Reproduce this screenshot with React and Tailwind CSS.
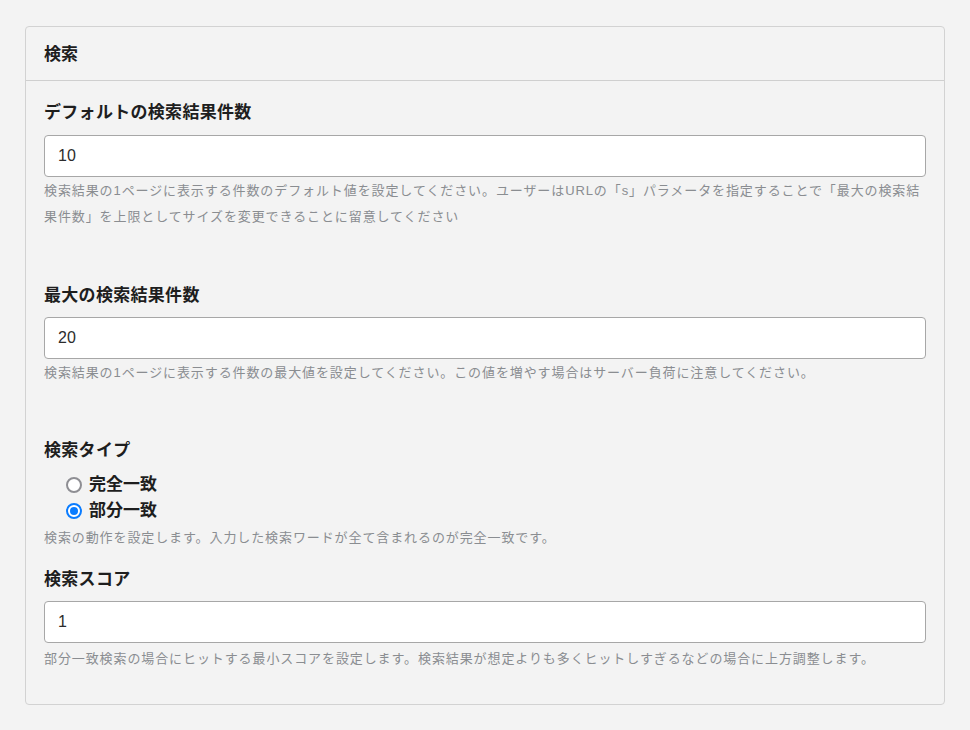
const font = { fontFamily: '"Liberation Sans", "Noto Sans CJK JP", sans-serif' }

const Label = ({ children, className = '' }) => (
  <div className={`text-[17px] leading-[24px] font-bold tracking-[0.3px] text-[#1e1e1e] ${className}`}>{children}</div>
)

const Help = ({ children, className = '' }) => (
  <p className={`text-[13px] leading-[26px] tracking-[0.9px] text-[#8a8d91] ${className}`}>{children}</p>
)

const TextInput = ({ value }) => (
  <input
    type="text"
    defaultValue={value}
    className="block w-full h-[42px] rounded-[4px] border border-[#a7a7a7] bg-white px-[13px] text-[16px] text-[#2c2c2c] outline-none"
    style={font}
  />
)

const Radio = ({ label, checked }) => (
  <label className="flex items-center h-[26px] pl-[22px] gap-[7px] cursor-pointer">
    <span
      className={`flex items-center justify-center w-[16px] h-[16px] rounded-full bg-white border-2 ${
        checked ? 'border-[#0a7cff]' : 'border-[#8e8e93]'
      }`}
    >
      {checked && <span className="w-[8px] h-[8px] rounded-full bg-[#0a7cff]" />}
    </span>
    <span className="text-[17px] font-bold text-[#1e1e1e]">{label}</span>
  </label>
)

export default function App() {
  return (
    <div className="min-h-[730px] bg-[#f3f3f3] pt-[26px] px-[25px]" style={font}>
      <div className="w-[920px] rounded-[4px] border border-[#d2d2d2] bg-[#f3f3f3]">
        <div className="h-[54px] border-b border-[#cfcfcf] px-[18px] pt-[2px] flex items-center">
          <span className="text-[17px] font-bold text-[#1e1e1e]">検索</span>
        </div>
        <div className="px-[18px] pt-[20px] pb-[32px]">
          <Label className="mb-[10px]">デフォルトの検索結果件数</Label>
          <TextInput value="10" />
          <Help className="mt-px">
            検索結果の1ページに表示する件数のデフォルト値を設定してください。ユーザーはURLの「s」パラメータを指定することで「最大の検索結果件数」を上限としてサイズを変更できることに留意してください
          </Help>

          <Label className="mt-[54px] mb-[9px]">最大の検索結果件数</Label>
          <TextInput value="20" />
          <Help className="mt-px">
            検索結果の1ページに表示する件数の最大値を設定してください。この値を増やす場合はサーバー負荷に注意してください。
          </Help>

          <Label className="mt-[53px] mb-[9px]">検索タイプ</Label>
          <Radio label="完全一致" />
          <Radio label="部分一致" checked />
          <Help className="mt-[1px]">検索の動作を設定します。入力した検索ワードが全て含まれるのが完全一致です。</Help>

          <Label className="mt-[17px] mb-[9px]">検索スコア</Label>
          <TextInput value="1" />
          <Help className="mt-[3px]">
            部分一致検索の場合にヒットする最小スコアを設定します。検索結果が想定よりも多くヒットしすぎるなどの場合に上方調整します。
          </Help>
        </div>
      </div>
    </div>
  )
}
